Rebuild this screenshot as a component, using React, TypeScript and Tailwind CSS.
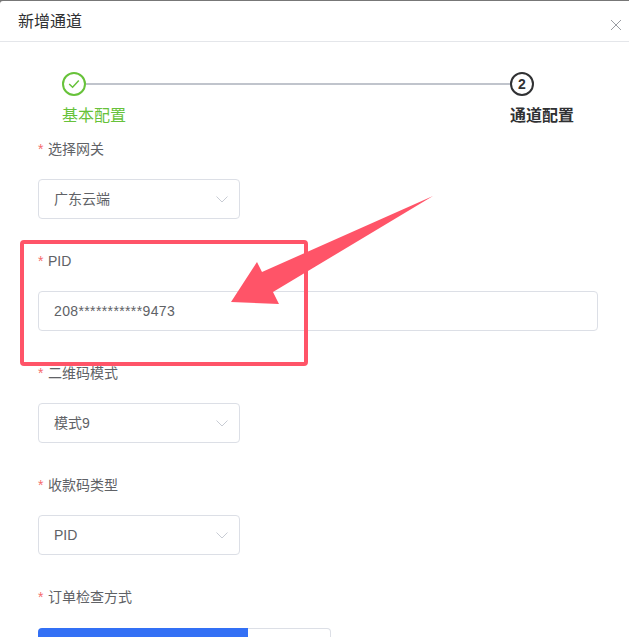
import React from "react";

function Chevron() {
  return (
    <svg width="12" height="7" viewBox="0 0 12 7" fill="none" className="shrink-0">
      <path d="M0.5 0.5 L6 6 L11.5 0.5" stroke="#c8ccd4" strokeWidth="1" />
    </svg>
  );
}

function Label({ text, className }: { text: string; className: string }) {
  return (
    <div className={`flex items-center h-[20px] text-[14px] leading-[20px] text-[#606266] ${className}`}>
      <span className="text-[#f56c6c] mr-[4.5px]">*</span>
      <span>{text}</span>
    </div>
  );
}

function Select({ value, className }: { value: string; className: string }) {
  return (
    <div className={`w-[202px] h-[40px] border border-[#dcdfe6] rounded-[4px] pl-[15px] pr-[11px] flex items-center justify-between text-[14px] text-[#606266] ${className}`}>
      <span>{value}</span>
      <Chevron />
    </div>
  );
}

export default function App() {
  return (
    <div className="relative w-[629px] h-[637px] overflow-hidden bg-[#777777] pt-[1px] font-['Liberation_Sans','Noto_Sans_CJK_SC',sans-serif]">
      <div className="h-[636px] bg-white rounded-tl-[3px]">
        <header className="h-[41px] border-b border-[#e4e6ea] pl-[18px] pr-[7px] flex items-center justify-between">
          <span className="text-[16px] leading-[22px] text-[#303133] mt-[2px]">新增通道</span>
          <svg width="12" height="12" viewBox="0 0 12 12" className="mt-[7px]" fill="none">
            <path d="M1 1 L11 11 M11 1 L1 11" stroke="#9a9da3" strokeWidth="1" />
          </svg>
        </header>

        <div className="pl-[62px] pt-[30px]">
          <div className="flex items-center w-[472px]">
            <div className="w-[24px] h-[24px] rounded-full border-2 border-[#67c23a] flex items-center justify-center shrink-0">
              <svg width="12" height="10" viewBox="0 0 12 10" fill="none">
                <path d="M1.2 5 L4.6 8.2 L10.8 1.6" stroke="#67c23a" strokeWidth="1.5" />
              </svg>
            </div>
            <div className="flex-1 h-[2px] bg-[#c0c4cc]" />
            <div className="w-[24px] h-[24px] rounded-full border-2 border-[#303133] flex items-center justify-center shrink-0 text-[14px] font-bold text-[#303133]">
              2
            </div>
          </div>
          <div className="flex justify-between w-[512px] mt-[9px] text-[16px] leading-[22px]">
            <span className="text-[#67c23a]">基本配置</span>
            <span className="font-bold text-[#303133]">通道配置</span>
          </div>
        </div>

        <div className="pl-[38px]">
          <Label text="选择网关" className="mt-[12px]" />
          <Select value="广东云端" className="mt-[20px]" />
          <Label text="PID" className="mt-[32px]" />
          <div className="w-[560px] h-[40px] mt-[20px] border border-[#dcdfe6] rounded-[4px] pl-[15px] flex items-center text-[14px] tracking-[0.37px] text-[#606266]">
            208***********9473
          </div>
          <Label text="二维码模式" className="mt-[32px]" />
          <Select value="模式9" className="mt-[20px]" />
          <Label text="收款码类型" className="mt-[32px]" />
          <Select value="PID" className="mt-[20px]" />
          <Label text="订单检查方式" className="mt-[32px]" />
          <div className="flex w-[293px] h-[40px] mt-[21px]">
            <div className="w-[210px] bg-[#3370f5] rounded-l-[4px]" />
            <div className="flex-1 border border-[#dcdfe6] border-l-0 rounded-r-[4px]" />
          </div>
        </div>
      </div>

      <div className="absolute left-[20px] top-[240px] w-[288px] h-[126px] border-[4px] border-[#ff5468] rounded-[4px]" />
      <svg className="absolute left-0 top-0" width="629" height="637" viewBox="0 0 629 637">
        <polygon points="433,196 262,272 257,262 231,302 279,304 273,292" fill="#ff5468" />
      </svg>
    </div>
  );
}
